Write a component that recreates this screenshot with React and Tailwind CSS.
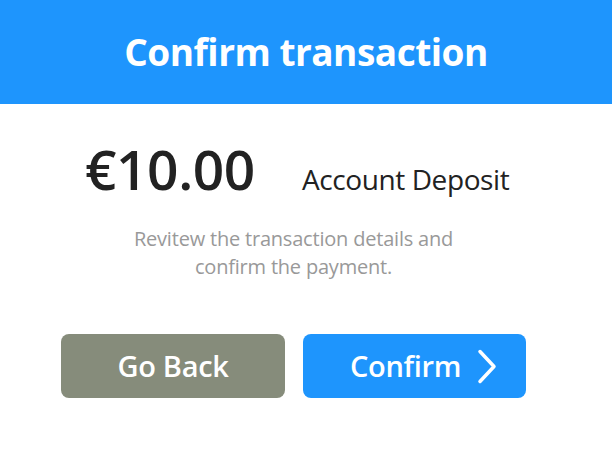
import React from 'react';

function ChevronRight() {
  return (
    <svg width="20" height="35" viewBox="0 0 20 35" fill="none" className="shrink-0">
      <path d="M3 2.5 L17 17.5 L3 32.5" stroke="white" strokeWidth="3.5" strokeLinecap="round" strokeLinejoin="round" />
    </svg>
  );
}

export default function App() {
  return (
    <div className="w-[612px] h-[460px] bg-white overflow-hidden" style={{ fontFamily: '"Open Sans", "Liberation Sans", sans-serif' }}>
      {/* header */}
      <div className="h-[104px] bg-[#1e95fd] flex items-center justify-center">
        <h1 className="text-white font-bold text-[37px] tracking-[-0.5px] leading-none pb-[2px]">Confirm transaction</h1>
      </div>

      <div className="w-[465px] ml-[61px] flex flex-col">
        {/* amount row */}
        <div className="flex items-baseline pl-[24px] pt-[37px] h-[100px]">
          <span className="text-[#222] font-semibold text-[55px] tracking-[-0.4px] leading-none">€10.00</span>
          <span className="text-[#222] text-[28px] ml-[47px] leading-none tracking-[-0.4px]">Account Deposit</span>
        </div>

        <p className="text-center text-[#999] text-[20px] leading-[28px] mt-[21px] tracking-[-0.2px]">
          Revitew the transaction details and
          <br />
          confirm the payment.
        </p>

        {/* actions */}
        <div className="flex gap-[18px] mt-[53px]">
          <button type="button" className="w-[224px] h-[64px] rounded-[8px] bg-[#868c7b] text-white font-semibold text-[29px] tracking-[-0.3px] flex items-center justify-center">
            Go Back
          </button>
          <button type="button" className="w-[223px] h-[64px] rounded-[8px] bg-[#1e95fd] text-white font-semibold text-[29px] tracking-[-0.3px] flex items-center justify-center gap-[16px] pl-[18px]">
            <span>Confirm</span>
            <ChevronRight />
          </button>
        </div>
      </div>
    </div>
  );
}
